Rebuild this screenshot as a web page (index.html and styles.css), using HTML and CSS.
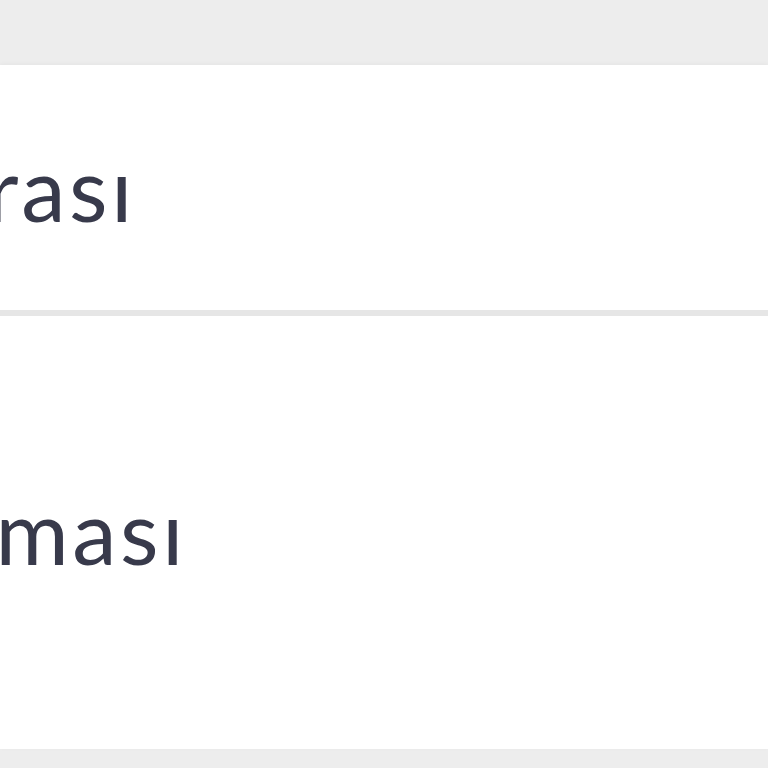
FILE: index.html
```html
<!DOCTYPE html>
<html lang="tr">
<head>
<meta charset="utf-8">
<link rel="stylesheet" href="styles.css">
</head>
<body>
<div class="page">
  <div class="topband"></div>
  <div class="list">
    <div class="row row-first">
      <div class="label label-1"><span>Telefon Numarası</span></div>
    </div>
    <div class="row row-second">
      <div class="label label-2"><span>Cam Kırılması</span></div>
    </div>
  </div>
</div>
</body>
</html>
```
FILE: styles.css
```css
html, body {
  margin: 0;
  padding: 0;
  background: #ededed;
}
.page {
  width: 768px;
  height: 768px;
  overflow: hidden;
  display: flex;
  flex-direction: column;
}
.topband {
  height: 65px;
  flex: none;
  background: #ededed;
}
.list {
  background: #ffffff;
  box-shadow: 0 -1px 4px rgba(0,0,0,0.04);
}
.row {
  display: flex;
  align-items: center;
  overflow: hidden;
  background: #fff;
}
.row-first {
  height: 245px;
  border-bottom: 6px solid #e6e6e6;
}
.row-second {
  height: 433px;
}
.label {
  display: flex;
  justify-content: flex-end;
  flex: none;
  font-family: Lato, "Noto Sans", sans-serif;
  font-size: 89px;
  letter-spacing: 3.5px;
  line-height: 1;
  color: #383a4b;
  white-space: nowrap;
}
.label-1 {
  width: 136px;
  margin-top: 0;
}
.label-2 {
  width: 187px;
  margin-top: -5px;
}
```
